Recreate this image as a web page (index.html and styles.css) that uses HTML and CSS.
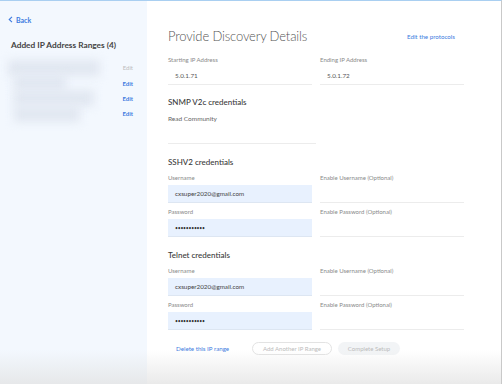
FILE: index.html
```html
<!DOCTYPE html>
<html lang="en">
<head>
	<meta charset="UTF-8">
	<title>Provide Discovery Details</title>
	<link rel="stylesheet" href="styles.css">
</head>
<body>
	<div class="page">
		<div class="side">
			<a class="back" href="#">
				<svg width="5" height="7" viewBox="0 0 5 7"><path d="M4 0.8 L1.2 3.5 L4 6.2" fill="none" stroke="#3d7be0" stroke-width="1.1"/></svg>
				Back
			</a>
			<h2 class="side-title">Added IP Address Ranges (4)</h2>
			<ul class="ranges">
				<li><span class="blur w1"></span><a class="edit off" href="#">Edit</a></li>
				<li><span class="blur w2"></span><a class="edit" href="#">Edit</a></li>
				<li><span class="blur w3"></span><a class="edit" href="#">Edit</a></li>
				<li><span class="blur w4"></span><a class="edit" href="#">Edit</a></li>
			</ul>
		</div>

		<div class="main">
			<div class="head">
				<h1 class="title">Provide Discovery Details</h1>
				<a class="link" href="#">Edit the protocols</a>
			</div>

			<div class="grid">
				<div class="field">
					<div class="label">Starting IP Address</div>
					<div class="box">5.0.1.71</div>
				</div>
				<div class="field">
					<div class="label">Ending IP Address</div>
					<div class="box">5.0.1.72</div>
				</div>
			</div>

			<h3 class="sect first">SNMP V2c credentials</h3>
			<div class="field wide">
				<div class="label dark">Read Community</div>
				<div class="box"></div>
			</div>

			<h3 class="sect">SSHV2 credentials</h3>
			<div class="grid">
				<div class="field">
					<div class="label">Username</div>
					<div class="box filled">cxsuper2020@gmail.com</div>
				</div>
				<div class="field">
					<div class="label">Enable Username (Optional)</div>
					<div class="box"></div>
				</div>
				<div class="field">
					<div class="label">Password</div>
					<div class="box filled dots">•••••••••••</div>
				</div>
				<div class="field">
					<div class="label">Enable Password (Optional)</div>
					<div class="box"></div>
				</div>
			</div>

			<h3 class="sect">Telnet credentials</h3>
			<div class="grid">
				<div class="field">
					<div class="label">Username</div>
					<div class="box filled">cxsuper2020@gmail.com</div>
				</div>
				<div class="field">
					<div class="label">Enable Username (Optional)</div>
					<div class="box"></div>
				</div>
				<div class="field">
					<div class="label">Password</div>
					<div class="box filled dots">•••••••••••</div>
				</div>
				<div class="field">
					<div class="label">Enable Password (Optional)</div>
					<div class="box"></div>
				</div>
			</div>

			<div class="actions">
				<a class="link del" href="#">Delete this IP range</a>
				<span class="btn ghost">Add Another IP Range</span>
				<span class="btn solid">Complete Setup</span>
			</div>
		</div>
		<div class="fade"></div>
	</div>
</body>
</html>
```

FILE: styles.css
```css
*{margin:0;padding:0;box-sizing:border-box;}
body{font-family:Lato,"Liberation Sans",sans-serif;color:#555;background:#fff;}
a{text-decoration:none;}
ul{list-style:none;}

.page{position:relative;display:flex;width:502px;height:384px;border-top:1px solid #a9cff1;border-right:1px solid #c9c9c9;overflow:hidden;}

.side{width:147px;background:#f3f8fe;padding:14px 0 0 8px;}
.back{display:flex;align-items:center;gap:3px;font-size:7px;font-weight:700;color:#3d7be0;height:9px;}
.side-title{font-size:8.3px;font-weight:700;color:#444;margin:16px 0 0 3px;line-height:10px;}
.ranges{margin-top:10px;width:125px;}
.ranges li{display:flex;justify-content:space-between;align-items:center;height:15.4px;}
.blur{display:block;height:16px;background:#e1e7f1;filter:blur(5px);}
.w1{width:92px;}
.w2{width:52px;margin-left:6px;}
.w3{width:80px;margin-left:6px;}
.w4{width:66px;margin-left:6px;}
.edit{font-size:6px;font-weight:700;color:#3d7be0;}
.edit.off{color:#bdbdbd;font-weight:400;}

.main{flex:1;padding:27px 0 0 21px;}
.head{display:flex;justify-content:space-between;align-items:center;width:287px;height:16px;}
.title{font-size:13px;font-weight:300;color:#555;letter-spacing:-0.15px;}
.link{font-size:6.2px;color:#3d7be0;}

.grid{display:grid;grid-template-columns:144px 144px;column-gap:8px;row-gap:5px;margin-top:12px;}
.field .label{font-size:6px;line-height:8px;color:#8a8a8a;}
.field .label.dark{font-size:6.5px;color:#666;}
.field .box{height:18px;margin-top:3px;padding-left:7px;display:flex;align-items:center;font-size:6.3px;color:#555;border-bottom:1.5px solid #ececec;}
.box.filled{background:#e8f1fe;border-bottom-color:#dde6f2;color:#444;}
.box.dots{font-size:5px;letter-spacing:-0.2px;color:#333;}
.field.wide{width:148px;margin-top:8px;}

.sect{font-size:8px;font-weight:500;color:#3a3a3a;line-height:10px;margin-top:13px;}
.sect.first{margin-top:12px;}
.sect + .grid{margin-top:7px;}

.actions{display:flex;align-items:center;margin-top:12px;height:13px;}
.del{margin-left:8px;width:76px;}
.btn{display:flex;align-items:center;justify-content:center;height:13px;border-radius:7px;font-size:6px;color:#bbb;}
.ghost{width:80px;border:1px solid #e3e3e3;}
.solid{width:62px;margin-left:6px;background:#f2f4f6;}

.fade{position:absolute;left:0;right:0;bottom:0;height:34px;background:linear-gradient(rgba(230,230,230,0),rgba(225,225,225,0.7));pointer-events:none;}
```
